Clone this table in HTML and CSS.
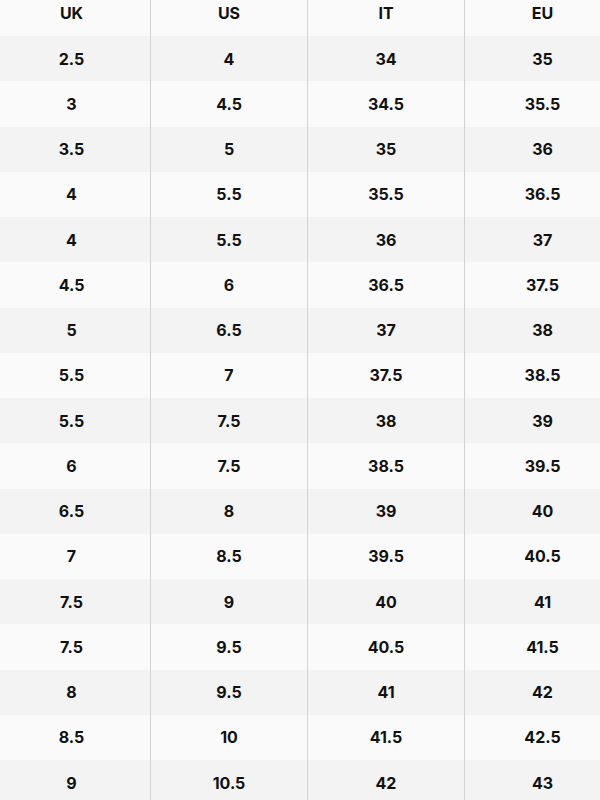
FILE: index.html
```html
<!DOCTYPE html>
<html>
<head>
<meta charset="utf-8">
<link rel="stylesheet" href="styles.css">
</head>
<body>
<div class="chart">
  <div class="row head"><div class="cell">UK</div><div class="cell">US</div><div class="cell">IT</div><div class="cell">EU</div></div>
  <div class="row odd"><div class="cell">2.5</div><div class="cell">4</div><div class="cell">34</div><div class="cell">35</div></div>
  <div class="row"><div class="cell">3</div><div class="cell">4.5</div><div class="cell">34.5</div><div class="cell">35.5</div></div>
  <div class="row odd"><div class="cell">3.5</div><div class="cell">5</div><div class="cell">35</div><div class="cell">36</div></div>
  <div class="row"><div class="cell">4</div><div class="cell">5.5</div><div class="cell">35.5</div><div class="cell">36.5</div></div>
  <div class="row odd"><div class="cell">4</div><div class="cell">5.5</div><div class="cell">36</div><div class="cell">37</div></div>
  <div class="row"><div class="cell">4.5</div><div class="cell">6</div><div class="cell">36.5</div><div class="cell">37.5</div></div>
  <div class="row odd"><div class="cell">5</div><div class="cell">6.5</div><div class="cell">37</div><div class="cell">38</div></div>
  <div class="row"><div class="cell">5.5</div><div class="cell">7</div><div class="cell">37.5</div><div class="cell">38.5</div></div>
  <div class="row odd"><div class="cell">5.5</div><div class="cell">7.5</div><div class="cell">38</div><div class="cell">39</div></div>
  <div class="row"><div class="cell">6</div><div class="cell">7.5</div><div class="cell">38.5</div><div class="cell">39.5</div></div>
  <div class="row odd"><div class="cell">6.5</div><div class="cell">8</div><div class="cell">39</div><div class="cell">40</div></div>
  <div class="row"><div class="cell">7</div><div class="cell">8.5</div><div class="cell">39.5</div><div class="cell">40.5</div></div>
  <div class="row odd"><div class="cell">7.5</div><div class="cell">9</div><div class="cell">40</div><div class="cell">41</div></div>
  <div class="row"><div class="cell">7.5</div><div class="cell">9.5</div><div class="cell">40.5</div><div class="cell">41.5</div></div>
  <div class="row odd"><div class="cell">8</div><div class="cell">9.5</div><div class="cell">41</div><div class="cell">42</div></div>
  <div class="row"><div class="cell">8.5</div><div class="cell">10</div><div class="cell">41.5</div><div class="cell">42.5</div></div>
  <div class="row odd"><div class="cell">9</div><div class="cell">10.5</div><div class="cell">42</div><div class="cell">43</div></div>
</div>
</body>
</html>
```

FILE: styles.css
```css
html, body {
  margin: 0;
  padding: 0;
  background: #fafafa;
  overflow: hidden;
}
.chart {
  margin-left: -7px;
  width: 627px;
  font-family: Inter, "Liberation Sans", sans-serif;
  font-weight: 700;
  font-size: 16px;
  color: #111;
}
.row {
  display: grid;
  grid-template-columns: 157px 157px 157px 156px;
  height: 45.25px;
  background: #fafafa;
}
.row.odd {
  background: #f3f3f3;
}
.row.head {
  height: 36px;
}
.cell {
  display: flex;
  align-items: center;
  justify-content: center;
  border-left: 1px solid #d2d2d2;
}
.cell:first-child {
  border-left: none;
}
.head .cell {
  align-items: flex-start;
  padding-top: 3px;
}
```
